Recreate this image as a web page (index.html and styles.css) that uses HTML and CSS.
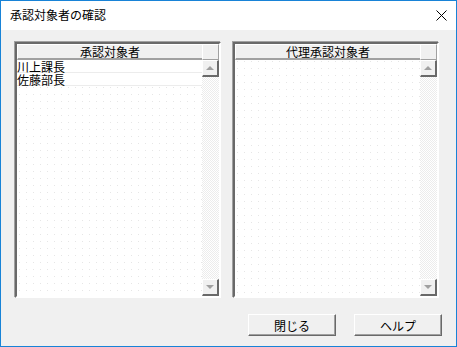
FILE: index.html
```html
<!DOCTYPE html>
<html lang="ja">
<head>
    <meta charset="UTF-8">
    <meta name="viewport" content="width=device-width, initial-scale=1.0">
    <title>承認対象者の確認</title>
    <link rel="stylesheet" href="styles.css">
</head>
<body>
    <div class="window">
        <div class="title-bar">
            <span class="title">承認対象者の確認</span>
            <svg class="close" width="11" height="11" viewBox="0 0 11 11">
                <path d="M0.5 0.5 L10.5 10.5 M10.5 0.5 L0.5 10.5" stroke="#000" stroke-width="1" fill="none"/>
            </svg>
        </div>
        <div class="content">
            <div class="panels">
                <div class="grid-box">
                    <div class="grid">
                        <div class="grid-header">承認対象者</div>
                        <div class="grid-row">川上課長</div>
                        <div class="grid-row">佐藤部長</div>
                        <div class="grid-empty"></div>
                    </div>
                    <div class="scrollbar">
                        <div class="corner"></div>
                        <div class="scroll-btn"><span class="arrow-up"></span></div>
                        <div class="track"></div>
                        <div class="scroll-btn"><span class="arrow-down"></span></div>
                    </div>
                </div>
                <div class="grid-box">
                    <div class="grid">
                        <div class="grid-header">代理承認対象者</div>
                        <div class="grid-empty"></div>
                    </div>
                    <div class="scrollbar">
                        <div class="corner"></div>
                        <div class="scroll-btn"><span class="arrow-up"></span></div>
                        <div class="track"></div>
                        <div class="scroll-btn"><span class="arrow-down"></span></div>
                    </div>
                </div>
            </div>
            <div class="buttons">
                <button class="btn">閉じる</button>
                <button class="btn">ヘルプ</button>
            </div>
        </div>
    </div>
</body>
</html>
```

FILE: styles.css
```css
body {
    margin: 0;
    font-family: "Noto Sans CJK JP", "Noto Sans", sans-serif;
    font-size: 12px;
    color: #000;
}
.window {
    width: 457px;
    height: 347px;
    box-sizing: border-box;
    border: 1px solid #1883d7;
    background-color: #f0f0f0;
    display: flex;
    flex-direction: column;
}
.title-bar {
    height: 30px;
    background-color: #fff;
    display: flex;
    align-items: center;
    justify-content: space-between;
    padding: 0 9px 0 9px;
}
.title {
    font-size: 12px;
    line-height: 14px;
    margin-top: -1px;
}
.content {
    flex: 1;
    display: flex;
    flex-direction: column;
    padding: 12px 17px 10px 14px;
}
.panels {
    display: flex;
    gap: 12px;
    height: 256px;
}
.grid-box {
    width: 206px;
    box-sizing: border-box;
    border-style: solid;
    border-width: 2px;
    border-color: #696969 #ffffff #ffffff #696969;
    box-shadow: -1px -1px 0 #a0a0a0;
    display: flex;
}
.grid {
    flex: 1;
    display: flex;
    flex-direction: column;
    background-color: #fff;
}
.grid-header {
    height: 13px;
    line-height: 14px;
    text-align: center;
    background-color: #f0f0f0;
    border-top: 1px solid #fff;
    border-left: 1px solid #fff;
    border-bottom: 2px solid #a0a0a0;
}
.grid-row {
    height: 12px;
    line-height: 13px;
    border-bottom: 1px solid #ececec;
    white-space: nowrap;
}
.grid-empty {
    flex: 1;
    background-color: #fff;
    background-image:
        linear-gradient(90deg, #fff 6px, transparent 6px),
        linear-gradient(#fff 6px, #e6e6e6 6px);
    background-size: 7px 7px;
    background-position: 3px 2px;
}
.scrollbar {
    width: 17px;
    display: flex;
    flex-direction: column;
}
.corner {
    height: 14px;
    background-color: #f0f0f0;
    border-style: solid;
    border-width: 1px;
    border-color: #fff #a0a0a0 #a0a0a0 #fff;
}
.scroll-btn {
    height: 14px;
    background-color: #f0f0f0;
    border-style: solid;
    border-width: 1px 2px 2px 1px;
    border-color: #fff #696969 #696969 #fff;
    display: flex;
    align-items: center;
    justify-content: center;
}
.arrow-up,
.arrow-down {
    width: 0;
    height: 0;
    border-left: 4px solid transparent;
    border-right: 4px solid transparent;
}
.arrow-up {
    border-bottom: 4px solid #a0a0a0;
}
.arrow-down {
    border-top: 4px solid #a0a0a0;
}
.track {
    flex: 1;
    background-image: repeating-conic-gradient(#ececec 0 25%, #ffffff 0 50%);
    background-size: 2px 2px;
}
.buttons {
    display: flex;
    justify-content: flex-end;
    gap: 18px;
    margin-top: 16px;
    margin-right: -3px;
}
.btn {
    width: 88px;
    height: 22px;
    padding: 0;
    font-family: "Noto Sans CJK JP", "Noto Sans", sans-serif;
    font-size: 12px;
    color: #000;
    background-color: #f0f0f0;
    border-style: solid;
    border-width: 1px;
    border-color: #fff #696969 #696969 #fff;
    box-shadow: inset -1px -1px 0 #a0a0a0;
}
```
